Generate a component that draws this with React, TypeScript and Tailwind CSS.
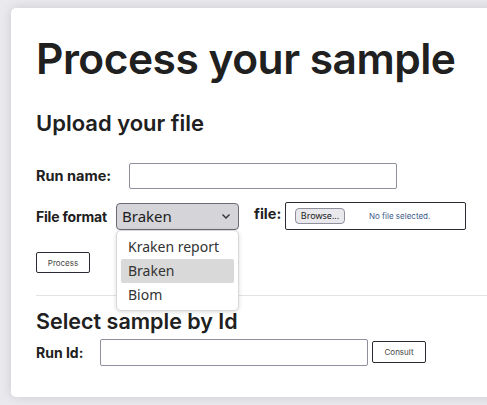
import React from "react";

export default function App() {
  return (
    <div className="w-[487px] h-[405px] overflow-hidden bg-[#e9e9ee] pt-[8px] pl-[11px]" style={{ fontFamily: "Inter, 'Noto Sans', sans-serif" }}>
      <div className="w-[520px] h-[389px] bg-white rounded-[5px] shadow-[0_0_12px_rgba(0,0,0,0.12)] pl-[25px] pt-[25px] text-[#202020]">
        <h1 className="text-[42.5px] leading-[52px] font-semibold tracking-[-0.5px]">Process your sample</h1>
        <h2 className="mt-[25px] text-[22px] leading-[26px] font-semibold">Upload your file</h2>
        <div className="mt-[27px] flex items-center h-[26px]">
          <span className="w-[93px] text-[14.5px] font-bold">Run name:</span>
          <div className="w-[268px] h-[26px] border border-[#8f8f9d] rounded-[2px]" />
        </div>
        <div className="mt-[13px] flex items-center h-[28px]">
          <span className="w-[80px] text-[14px] font-bold tracking-[-0.2px] whitespace-nowrap">File format</span>
          <div className="relative">
            <div className="w-[123px] h-[27px] bg-[#d4d4d9] border border-[#6b6b75] rounded-[4px] flex items-center justify-between pl-[5px] pr-[7px] text-[15px]" style={{ fontFamily: "'Noto Sans', sans-serif" }}>
              <span>Braken</span>
              <svg width="10" height="7" viewBox="0 0 10 7"><path d="M1.5 1.5 L5 5 L8.5 1.5" fill="none" stroke="#333" strokeWidth="1.4" /></svg>
            </div>
            <div className="absolute left-0 top-[27px] w-[123px] h-[81px] bg-white border border-[#d8d8dc] rounded-[5px] shadow-[0_1px_4px_rgba(0,0,0,0.15)] px-[4px] pt-[4px] text-[14px] text-[#333]" style={{ fontFamily: "'Noto Sans', sans-serif" }}>
              <div className="h-[24px] flex items-center pl-[7px]">Kraken report</div>
              <div className="h-[24px] flex items-center pl-[7px] bg-[#d9d9d9] rounded-[2px]">Braken</div>
              <div className="h-[24px] flex items-center pl-[7px]">Biom</div>
            </div>
          </div>
          <span className="ml-[15px] w-[31px] text-[14.5px] font-bold self-start mt-[1px]">file:</span>
          <div className="w-[181px] h-[28px] border border-[#2b2b33] rounded-[2px] flex items-center pl-[9px]">
            <div className="w-[50px] h-[16px] bg-[#e9e9ed] border border-[#8f8f9d] rounded-[4px] text-[9px] flex items-center justify-center" style={{ fontFamily: "'Noto Sans', sans-serif" }}>Browse...</div>
            <span className="ml-[24px] text-[8px] text-[#3c5a8a]">No file selected.</span>
          </div>
        </div>
        <div className="mt-[22px] w-[54px] h-[21px] border border-[#2b2b33] rounded-[2px] flex items-center justify-center text-[8px] text-[#444]">Process</div>
        <div className="mt-[22px] h-px bg-[#e2e2e4]" />
        <h2 className="mt-[12px] text-[21.5px] leading-[26px] font-semibold">Select sample by Id</h2>
        <div className="mt-[4px] flex items-center h-[28px]">
          <span className="w-[64px] text-[14px] font-bold">Run Id:</span>
          <div className="w-[268px] h-[27px] border border-[#8f8f9d] rounded-[2px]" />
          <div className="ml-[4px] w-[54px] h-[22px] border border-[#2b2b33] rounded-[2px] flex items-center justify-center text-[8px] text-[#444]">Consult</div>
        </div>
      </div>
    </div>
  );
}
